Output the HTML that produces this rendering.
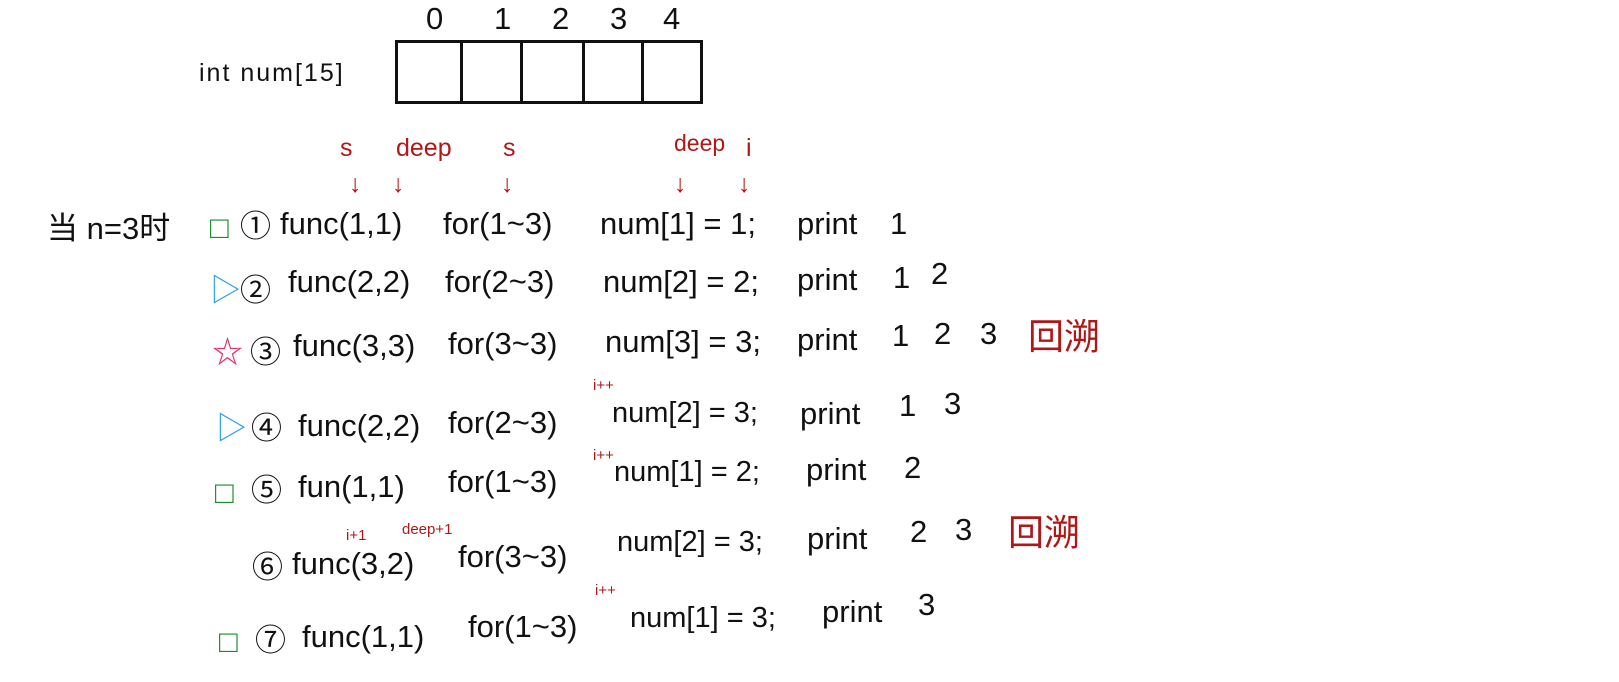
<!DOCTYPE html>
<html><head><meta charset="utf-8"><style>
body{margin:0;width:1619px;height:682px;background:#fff;position:relative;overflow:hidden;font-family:"Liberation Sans","Noto Sans CJK SC",sans-serif;color:#111}
.t{position:absolute;white-space:nowrap;font-size:31px;line-height:1}
.r{color:#b01818}
.s{font-size:15px}
.g{color:#1a8a2a}.b{color:#2a9ee8}
</style></head><body>
<div class="t" style="left:199px;top:61px;font-size:25px;letter-spacing:2px">int num[15]</div>
<div style="position:absolute;left:395px;top:40px;width:302px;height:58px;border:3px solid #111"></div>
<div style="position:absolute;left:460px;top:40px;width:3px;height:62px;background:#111"></div>
<div style="position:absolute;left:520px;top:40px;width:3px;height:62px;background:#111"></div>
<div style="position:absolute;left:582px;top:40px;width:3px;height:62px;background:#111"></div>
<div style="position:absolute;left:641px;top:40px;width:3px;height:62px;background:#111"></div>
<div class="t" style="left:426px;top:3px">0</div>
<div class="t" style="left:494px;top:3px">1</div>
<div class="t" style="left:552px;top:3px">2</div>
<div class="t" style="left:610px;top:3px">3</div>
<div class="t" style="left:663px;top:3px">4</div>

<div class="t r" style="left:340px;top:136px;font-size:25px">s</div>
<div class="t r" style="left:396px;top:136px;font-size:25px">deep</div>
<div class="t r" style="left:503px;top:136px;font-size:25px">s</div>
<div class="t r" style="left:674px;top:132px;font-size:23px">deep</div>
<div class="t r" style="left:746px;top:136px;font-size:25px">i</div>
<div class="t r" style="left:349px;top:172px;font-size:25px">↓</div>
<div class="t r" style="left:392px;top:172px;font-size:25px">↓</div>
<div class="t r" style="left:501px;top:172px;font-size:25px">↓</div>
<div class="t r" style="left:674px;top:172px;font-size:25px">↓</div>
<div class="t r" style="left:738px;top:172px;font-size:25px">↓</div>

<div class="t" style="left:47px;top:213px">当 n=3时</div>
<!-- row1 -->
<div class="t g" style="left:210px;top:212px">□</div>
<div class="t" style="left:240px;top:211px">①</div>
<div class="t" style="left:280px;top:208px">func(1,1)</div>
<div class="t" style="left:443px;top:208px">for(1~3)</div>
<div class="t" style="left:600px;top:208px">num[1] = 1;</div>
<div class="t" style="left:797px;top:208px">print</div>
<div class="t" style="left:890px;top:208px">1</div>
<!-- row2 -->
<div class="t b" style="left:210px;top:275px">▷</div>
<div class="t" style="left:240px;top:275px">②</div>
<div class="t" style="left:288px;top:266px">func(2,2)</div>
<div class="t" style="left:445px;top:266px">for(2~3)</div>
<div class="t" style="left:603px;top:266px">num[2] = 2;</div>
<div class="t" style="left:797px;top:264px">print</div>
<div class="t" style="left:893px;top:262px">1</div>
<div class="t" style="left:931px;top:258px">2</div>
<!-- row3 -->
<div class="t" style="left:212px;top:337px;color:#e0306a">☆</div>
<div class="t" style="left:250px;top:337px">③</div>
<div class="t" style="left:293px;top:330px">func(3,3)</div>
<div class="t" style="left:448px;top:328px">for(3~3)</div>
<div class="t" style="left:605px;top:326px">num[3] = 3;</div>
<div class="t" style="left:797px;top:324px">print</div>
<div class="t" style="left:892px;top:320px">1</div>
<div class="t" style="left:934px;top:318px">2</div>
<div class="t" style="left:980px;top:318px">3</div>
<div class="t r" style="left:1028px;top:319px;font-size:36px">回溯</div>
<!-- row4 -->
<div class="t r s" style="left:593px;top:378px">i++</div>
<div class="t b" style="left:216px;top:413px">▷</div>
<div class="t" style="left:251px;top:413px">④</div>
<div class="t" style="left:298px;top:410px">func(2,2)</div>
<div class="t" style="left:448px;top:407px">for(2~3)</div>
<div class="t" style="left:612px;top:399px;font-size:29px">num[2] = 3;</div>
<div class="t" style="left:800px;top:398px">print</div>
<div class="t" style="left:899px;top:390px">1</div>
<div class="t" style="left:944px;top:388px">3</div>
<!-- row5 -->
<div class="t r s" style="left:593px;top:448px">i++</div>
<div class="t g" style="left:215px;top:477px">□</div>
<div class="t" style="left:251px;top:475px">⑤</div>
<div class="t" style="left:298px;top:471px">fun(1,1)</div>
<div class="t" style="left:448px;top:466px">for(1~3)</div>
<div class="t" style="left:614px;top:458px;font-size:29px">num[1] = 2;</div>
<div class="t" style="left:806px;top:454px">print</div>
<div class="t" style="left:904px;top:452px">2</div>
<!-- row6 -->
<div class="t r s" style="left:346px;top:528px">i+1</div>
<div class="t r s" style="left:402px;top:522px">deep+1</div>
<div class="t" style="left:252px;top:552px">⑥</div>
<div class="t" style="left:292px;top:548px">func(3,2)</div>
<div class="t" style="left:458px;top:541px">for(3~3)</div>
<div class="t" style="left:617px;top:528px;font-size:29px">num[2] = 3;</div>
<div class="t" style="left:807px;top:523px">print</div>
<div class="t" style="left:910px;top:516px">2</div>
<div class="t" style="left:955px;top:514px">3</div>
<div class="t r" style="left:1008px;top:515px;font-size:36px">回溯</div>
<!-- row7 -->
<div class="t r s" style="left:595px;top:583px">i++</div>
<div class="t g" style="left:219px;top:626px">□</div>
<div class="t" style="left:255px;top:625px">⑦</div>
<div class="t" style="left:302px;top:621px">func(1,1)</div>
<div class="t" style="left:468px;top:611px">for(1~3)</div>
<div class="t" style="left:630px;top:604px;font-size:29px">num[1] = 3;</div>
<div class="t" style="left:822px;top:596px">print</div>
<div class="t" style="left:918px;top:589px">3</div>
</body></html>
